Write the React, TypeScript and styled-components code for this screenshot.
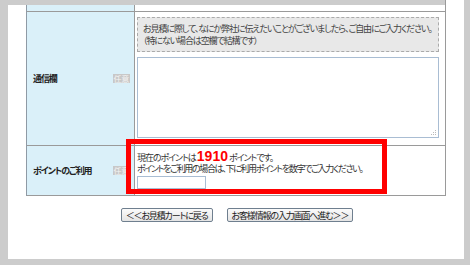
import styled, { createGlobalStyle } from "styled-components";

const GlobalStyle = createGlobalStyle`
  html, body {
    margin: 0;
    padding: 0;
    background: #cccccc;
  }
  body {
    font-family: "Noto Sans CJK JP", "Noto Sans", sans-serif;
    color: #333333;
  }
`;

const Frame = styled.div`
  width: 470px;
  height: 265px;
  box-sizing: border-box;
  padding: 0 6px 6px 8px;
  background: #cccccc;
`;

const Page = styled.div`
  position: relative;
  height: 259px;
  background: #ffffff;
  display: flex;
  flex-direction: column;
`;

const TopCap = styled.div`
  display: flex;
  height: 5px;
`;

const CapGray = styled.div`
  width: 437px;
  background: #cccccc;
`;

const CapLine = styled.div`
  width: 1px;
  background: #9a9a9a;
`;

const Table = styled.div`
  margin-left: 18px;
  width: 418px;
  border-left: 1px solid #8f9aa5;
  border-right: 1px solid #9a9a9a;
`;

const Row = styled.div<{ $h: number }>`
  display: grid;
  grid-template-columns: 108px 1fr;
  height: ${(p) => p.$h}px;
  border-bottom: 1px solid #9a9a9a;
`;

const LabelCell = styled.div`
  background: #daf0f9;
  border-right: 1px solid #9a9a9a;
  display: flex;
  align-items: center;
  justify-content: space-between;
  padding: 0 4px 0 6px;
`;

const Label = styled.span`
  font-size: 9px;
  font-weight: bold;
  color: #222222;
  font-feature-settings: "palt";
  letter-spacing: -1.1px;
`;

const Badge = styled.span`
  background: #c8c8c8;
  color: #f4f4f4;
  font-size: 8px;
  line-height: 9px;
  padding: 0 1px;
  letter-spacing: -0.3px;
`;

const FieldCell = styled.div<{ $pt: number }>`
  display: flex;
  flex-direction: column;
  padding: ${(p) => p.$pt}px 6px 0 2px;
`;

const Note = styled.div`
  height: 35px;
  box-sizing: border-box;
  background: #e8e8e8;
  border: 1px dashed #aaaaaa;
  padding: 5px 0 0 5px;
  font-size: 9px;
  line-height: 12px;
  color: #444444;
  font-feature-settings: "palt";
  letter-spacing: -1.1px;
  white-space: nowrap;
`;

const TextArea = styled.div`
  position: relative;
  margin-top: 5px;
  height: 81px;
  box-sizing: border-box;
  border: 1px solid #a9bdd3;
  background: #ffffff;
`;

const Grip = styled.svg`
  position: absolute;
  right: 1px;
  bottom: 1px;
`;

const PointText = styled.div<{ $h: number; $ls: number }>`
  height: ${(p) => p.$h}px;
  font-size: 9px;
  line-height: ${(p) => p.$h}px;
  color: #333333;
  font-feature-settings: "palt";
  letter-spacing: ${(p) => p.$ls}px;
  white-space: nowrap;
`;

const PointNum = styled.span`
  color: #ff0000;
  font-family: "Liberation Sans", Arial, sans-serif;
  font-weight: bold;
  font-size: 14px;
  line-height: 0;
  letter-spacing: 0;
  margin: 0 1px;
`;

const PointInput = styled.div`
  margin-top: 2px;
  width: 69px;
  height: 13px;
  box-sizing: border-box;
  border: 1px solid #a9bdd3;
`;

const Buttons = styled.div`
  display: flex;
  justify-content: center;
  gap: 14px;
  margin-top: 12px;
  padding-left: 2px;
`;

const Button = styled.div`
  height: 14px;
  box-sizing: border-box;
  display: flex;
  align-items: center;
  padding: 0 4px;
  border: 1px solid #6f7f8f;
  border-radius: 2px;
  background: linear-gradient(#fbfbfb, #e4e4e4);
  font-size: 9px;
  color: #222222;
  font-feature-settings: "palt";
  letter-spacing: -1.15px;
  white-space: nowrap;
`;

const Highlight = styled.div`
  position: absolute;
  left: 118px;
  top: 139px;
  width: 261px;
  height: 55px;
  box-sizing: border-box;
  border: 5px solid #ff0000;
`;

export default function App() {
  return (
    <>
      <GlobalStyle />
      <Frame>
        <Page>
          <TopCap>
            <CapGray />
            <CapLine />
          </TopCap>
          <Table>
            <Row $h={6}>
              <LabelCell />
              <div />
            </Row>
            <Row $h={133}>
              <LabelCell>
                <Label>通信欄</Label>
                <Badge>任意</Badge>
              </LabelCell>
              <FieldCell $pt={5}>
                <Note>
                  お見積に際して、なにか弊社に伝えたいことがございましたら、ご自由にご入力ください。
                  <br />
                  （特にない場合は空欄で結構です）
                </Note>
                <TextArea>
                  <Grip width="6" height="6" viewBox="0 0 6 6">
                    <rect x="4" y="0" width="1" height="1" fill="#bbb" />
                    <rect x="2" y="2" width="1" height="1" fill="#bbb" />
                    <rect x="4" y="2" width="1" height="1" fill="#bbb" />
                    <rect x="0" y="4" width="1" height="1" fill="#bbb" />
                    <rect x="2" y="4" width="1" height="1" fill="#bbb" />
                    <rect x="4" y="4" width="1" height="1" fill="#bbb" />
                  </Grip>
                </TextArea>
              </FieldCell>
            </Row>
            <Row $h={49}>
              <LabelCell>
                <Label>ポイントのご利用</Label>
                <Badge>任意</Badge>
              </LabelCell>
              <FieldCell $pt={7}>
                <PointText $h={10} $ls={-1.05}>
                  現在のポイントは<PointNum>1910</PointNum>ポイントです。
                </PointText>
                <PointText $h={11} $ls={-1.35}>
                  ポイントをご利用の場合は、下に利用ポイントを数字でご入力ください。
                </PointText>
                <PointInput />
              </FieldCell>
            </Row>
          </Table>
          <Buttons>
            <Button>＜＜お見積カートに戻る</Button>
            <Button>お客様情報の入力画面へ進む＞＞</Button>
          </Buttons>
          <Highlight />
        </Page>
      </Frame>
    </>
  );
}
